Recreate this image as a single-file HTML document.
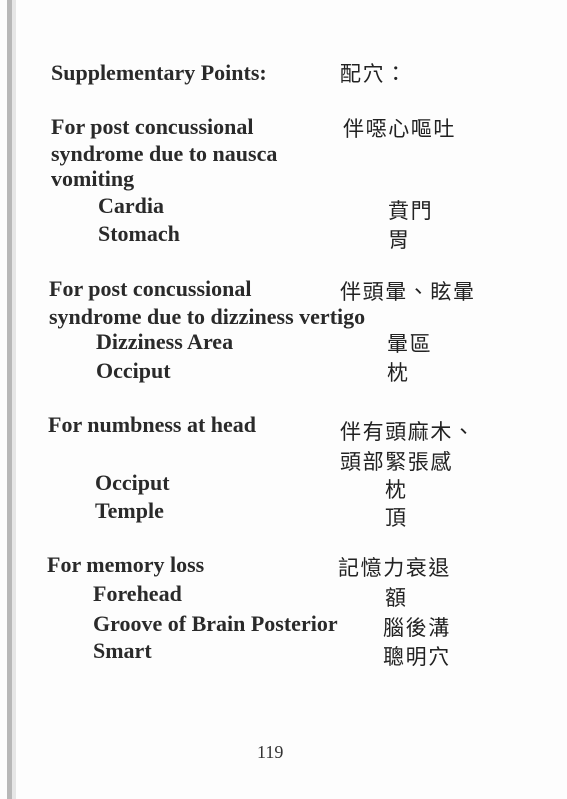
<!DOCTYPE html>
<html><head><meta charset="utf-8"><style>
html,body{margin:0;padding:0;}
body{width:567px;height:799px;background:#fdfdfd;position:relative;overflow:hidden;}
.bar{position:absolute;left:7px;top:0;width:5px;height:799px;background:#b8b8b8;}
.bar2{position:absolute;left:12px;top:0;width:4px;height:799px;background:#e6e6e6;}
.e{position:absolute;font-family:"Liberation Serif",serif;font-weight:bold;font-size:22px;line-height:22px;color:#2a2a2a;white-space:nowrap;}
.c{position:absolute;font-family:"Liberation Sans","Noto Sans CJK TC",sans-serif;font-weight:400;font-size:21px;line-height:24px;color:#222;white-space:nowrap;letter-spacing:1.6px;}
.n{position:absolute;font-family:"Liberation Serif",serif;font-size:18px;color:#333;}
</style></head><body>
<div class="bar"></div><div class="bar2"></div>
<div class="e" style="left:51px;top:62px">Supplementary Points:</div>
<div class="c" style="left:340px;top:63px">配穴：</div>

<div class="e" style="left:51px;top:116px">For post concussional</div>
<div class="c" style="left:343px;top:118px">伴噁心嘔吐</div>
<div class="e" style="left:51px;top:143px">syndrome due to nausca</div>
<div class="e" style="left:51px;top:168px">vomiting</div>
<div class="e" style="left:98px;top:195px">Cardia</div>
<div class="c" style="left:388px;top:200px">賁門</div>
<div class="e" style="left:98px;top:223px">Stomach</div>
<div class="c" style="left:388px;top:229px">胃</div>

<div class="e" style="left:49px;top:278px">For post concussional</div>
<div class="c" style="left:340px;top:281px">伴頭暈、眩暈</div>
<div class="e" style="left:49px;top:306px">syndrome due to dizziness vertigo</div>
<div class="e" style="left:96px;top:331px">Dizziness Area</div>
<div class="c" style="left:387px;top:333px">暈區</div>
<div class="e" style="left:96px;top:360px">Occiput</div>
<div class="c" style="left:387px;top:362px">枕</div>

<div class="e" style="left:48px;top:414px">For numbness at head</div>
<div class="c" style="left:340px;top:421px">伴有頭麻木、</div>
<div class="c" style="left:340px;top:451px">頭部緊張感</div>
<div class="e" style="left:95px;top:472px">Occiput</div>
<div class="c" style="left:385px;top:479px">枕</div>
<div class="e" style="left:95px;top:500px">Temple</div>
<div class="c" style="left:385px;top:507px">頂</div>

<div class="e" style="left:47px;top:554px">For memory loss</div>
<div class="c" style="left:338px;top:557px">記憶力衰退</div>
<div class="e" style="left:93px;top:583px">Forehead</div>
<div class="c" style="left:385px;top:587px">額</div>
<div class="e" style="left:93px;top:613px">Groove of Brain Posterior</div>
<div class="c" style="left:383px;top:617px">腦後溝</div>
<div class="e" style="left:93px;top:640px">Smart</div>
<div class="c" style="left:383px;top:646px">聰明穴</div>

<div class="n" style="left:257px;top:742px">119</div>
</body></html>
